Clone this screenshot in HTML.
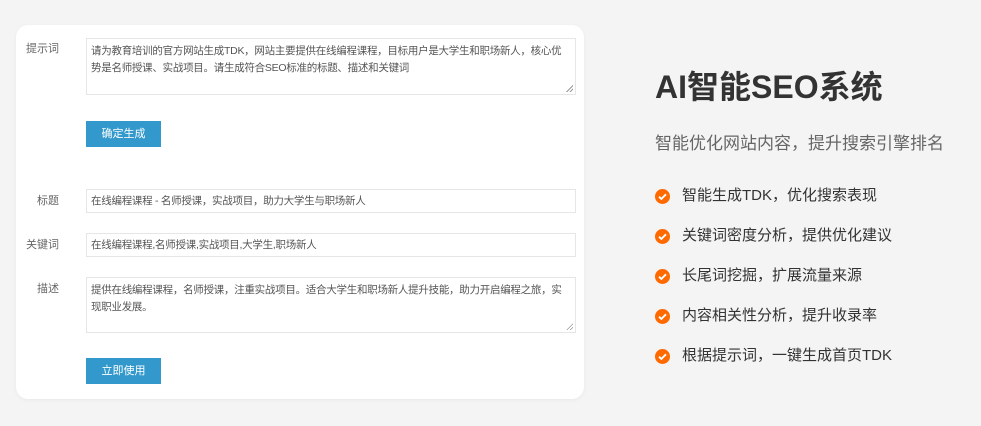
<!DOCTYPE html>
<html><head><meta charset="utf-8"><style>
*{margin:0;padding:0;box-sizing:border-box}
body{width:981px;height:426px;background:#f4f4f4;font-family:"Liberation Sans","Noto Sans CJK SC",sans-serif;position:relative;overflow:hidden}
.card{position:absolute;left:16px;top:25px;width:568px;height:374px;background:#fff;border-radius:12px;box-shadow:0 1px 4px rgba(0,0,0,.05)}
.lab{position:absolute;left:0;font-size:11px;color:#666;width:43px;text-align:right}
.box{position:absolute;left:70px;width:490px;border:1px solid #e6e6e6;background:#fff;font-size:10.5px;color:#555;padding:4px 4px;line-height:17px;letter-spacing:-0.27px}
.btn{position:absolute;left:70px;width:75px;height:26px;background:#3399cc;color:#fff;font-size:11px;text-align:center;line-height:26px}
.grip{position:absolute;right:2px;bottom:2px;width:7px;height:7px;background:linear-gradient(135deg,transparent 50%,#999 50%,#999 60%,transparent 60%,transparent 75%,#999 75%,#999 85%,transparent 85%)}
h1{position:absolute;left:655px;top:62px;font-size:32px;font-weight:bold;color:#333;letter-spacing:0}
.sub{position:absolute;left:655px;top:129px;font-size:17px;color:#666}
.it{position:absolute;left:655px;font-size:15px;color:#333;height:20px;line-height:20px}
.it svg{position:absolute;left:0;top:3px}
.it span{position:absolute;left:27px;white-space:nowrap}
</style></head><body>
<div class="card">
<div class="lab" style="top:15px">提示词</div>
<div class="box" style="top:13px;height:57px">请为教育培训的官方网站生成TDK，网站主要提供在线编程课程，目标用户是大学生和职场新人，核心优<br>势是名师授课、实战项目。请生成符合SEO标准的标题、描述和关键词<div class="grip"></div></div>
<div class="btn" style="top:96px">确定生成</div>
<div class="lab" style="top:167px">标题</div>
<div class="box" style="top:164px;height:24px;line-height:14px">在线编程课程 - 名师授课，实战项目，助力大学生与职场新人</div>
<div class="lab" style="top:211px">关键词</div>
<div class="box" style="top:208px;height:24px;line-height:14px">在线编程课程,名师授课,实战项目,大学生,职场新人</div>
<div class="lab" style="top:255px">描述</div>
<div class="box" style="top:252px;height:56px">提供在线编程课程，名师授课，注重实战项目。适合大学生和职场新人提升技能，助力开启编程之旅，实<br>现职业发展。<div class="grip"></div></div>
<div class="btn" style="top:333px">立即使用</div>
</div>
<h1>AI智能SEO系统</h1>
<div class="sub">智能优化网站内容，提升搜索引擎排名</div>
<div class="it" style="top:186px"><svg width="15" height="15" viewBox="0 0 16 16"><circle cx="8" cy="8" r="8" fill="#ff6a00"/><path d="M4.3 8.2l2.5 2.4 4.9-4.9" stroke="#fff" stroke-width="2" fill="none"/></svg><span>智能生成TDK，优化搜索表现</span></div>
<div class="it" style="top:226px"><svg width="15" height="15" viewBox="0 0 16 16"><circle cx="8" cy="8" r="8" fill="#ff6a00"/><path d="M4.3 8.2l2.5 2.4 4.9-4.9" stroke="#fff" stroke-width="2" fill="none"/></svg><span>关键词密度分析，提供优化建议</span></div>
<div class="it" style="top:266px"><svg width="15" height="15" viewBox="0 0 16 16"><circle cx="8" cy="8" r="8" fill="#ff6a00"/><path d="M4.3 8.2l2.5 2.4 4.9-4.9" stroke="#fff" stroke-width="2" fill="none"/></svg><span>长尾词挖掘，扩展流量来源</span></div>
<div class="it" style="top:306px"><svg width="15" height="15" viewBox="0 0 16 16"><circle cx="8" cy="8" r="8" fill="#ff6a00"/><path d="M4.3 8.2l2.5 2.4 4.9-4.9" stroke="#fff" stroke-width="2" fill="none"/></svg><span>内容相关性分析，提升收录率</span></div>
<div class="it" style="top:346px"><svg width="15" height="15" viewBox="0 0 16 16"><circle cx="8" cy="8" r="8" fill="#ff6a00"/><path d="M4.3 8.2l2.5 2.4 4.9-4.9" stroke="#fff" stroke-width="2" fill="none"/></svg><span>根据提示词，一键生成首页TDK</span></div>
</body></html>
